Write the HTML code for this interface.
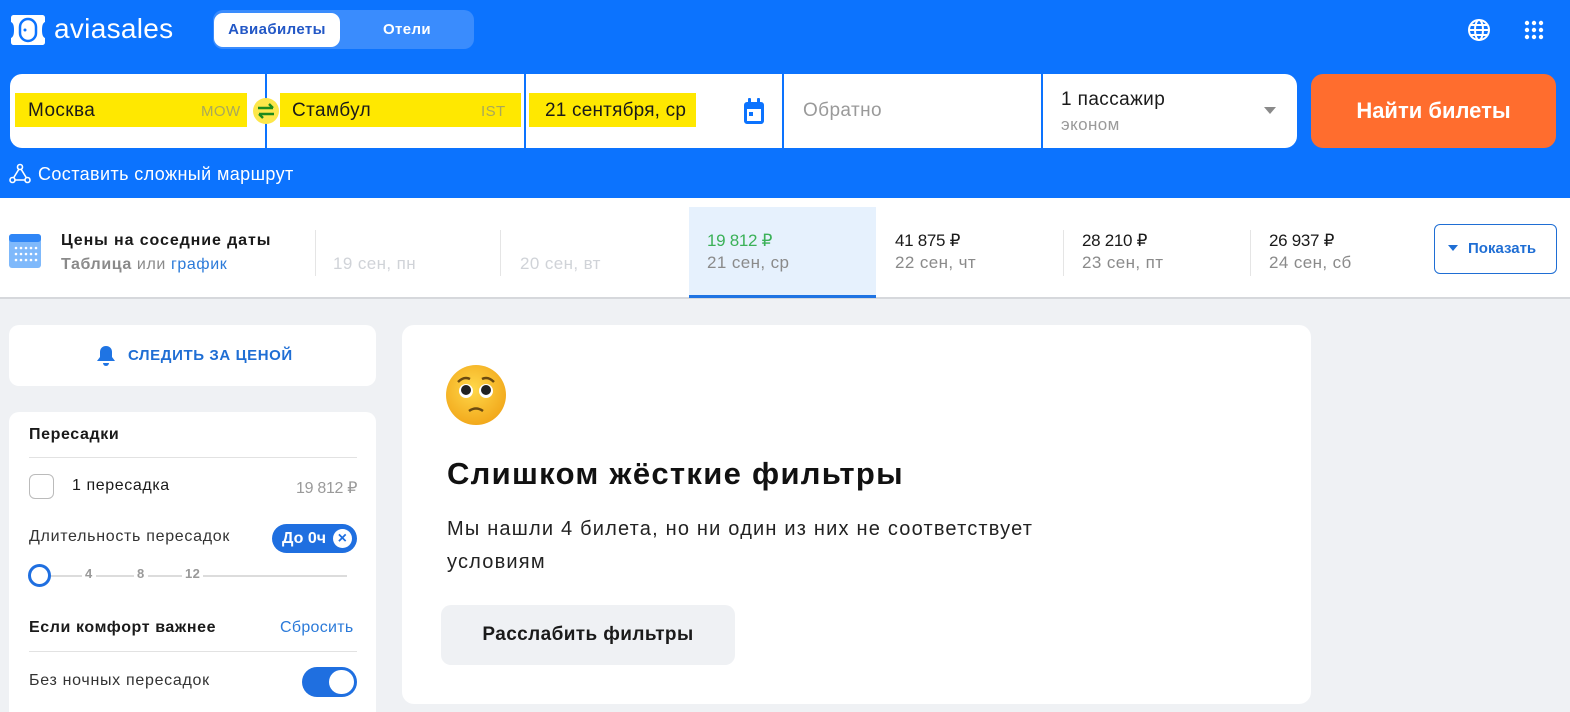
<!DOCTYPE html>
<html><head><meta charset="utf-8"><style>
*{box-sizing:border-box;margin:0;padding:0}
html,body{width:1570px;height:712px;overflow:hidden}
body{background:#eff1f4;font-family:"Liberation Sans","Noto Sans CJK SC",sans-serif;color:#1a1a1a;position:relative;letter-spacing:0.4px}
.abs{position:absolute}
.hdr{left:0;top:0;width:1570px;height:198px;background:#0c73fe}
.fld{top:74px;height:74px;background:#fff}
.yl{background:#ffe800;height:34px;top:93px}
.t18{font-size:19px}
</style></head><body>
<div class="abs hdr"></div>
<svg class="abs" style="left:10px;top:13px" width="36" height="34" viewBox="0 0 36 34"><path d="M4 2h28c2 0 3 1 3 3v4c-2 1-3 3-3 8s1 7 3 8v4c0 2-1 3-3 3H4c-2 0-3-1-3-3v-4c2-1 3-3 3-8S3 10 1 9V5c0-2 1-3 3-3z" fill="#fff"/><rect x="10" y="6" width="16" height="22" rx="8" fill="none" stroke="#0c73fe" stroke-width="2.5"/><circle cx="15" cy="17" r="1.5" fill="#0c73fe"/></svg>
<div class="abs" style="left:54px;top:13px;color:#fff;font-size:28px;letter-spacing:0.3px">aviasales</div>
<div class="abs" style="left:213px;top:10px;width:261px;height:39px;background:#3a8cfd;border-radius:10px"></div>
<div class="abs" style="left:214px;top:13px;width:126px;height:34px;background:#fff;border-radius:9px;color:#2257c6;font-weight:bold;font-size:15px;text-align:center;line-height:34px">Авиабилеты</div>
<div class="abs" style="left:340px;top:13px;width:134px;height:34px;color:#fff;font-weight:bold;font-size:15px;text-align:center;line-height:34px">Отели</div>
<svg class="abs" style="left:1467px;top:18px" width="24" height="24" viewBox="0 0 24 24" fill="none" stroke="#fff" stroke-width="2"><circle cx="12" cy="12" r="10"/><ellipse cx="12" cy="12" rx="4" ry="10"/><path d="M2 12h20M4 7h16M4 17h16"/></svg>
<svg class="abs" style="left:1524px;top:20px" width="20" height="20" fill="#fff"><circle cx="3" cy="3" r="2.2"/><circle cx="10" cy="3" r="2.2"/><circle cx="17" cy="3" r="2.2"/><circle cx="3" cy="10" r="2.2"/><circle cx="10" cy="10" r="2.2"/><circle cx="17" cy="10" r="2.2"/><circle cx="3" cy="17" r="2.2"/><circle cx="10" cy="17" r="2.2"/><circle cx="17" cy="17" r="2.2"/></svg>
<div class="abs fld" style="left:10px;width:255px;border-radius:12px 0 0 12px"></div>
<div class="abs fld" style="left:267px;width:257px"></div>
<div class="abs fld" style="left:526px;width:256px"></div>
<div class="abs fld" style="left:784px;width:257px"></div>
<div class="abs fld" style="left:1043px;width:254px;border-radius:0 12px 12px 0"></div>
<div class="abs yl" style="left:15px;width:232px"></div>
<div class="abs yl" style="left:280px;width:241px"></div>
<div class="abs yl" style="left:529px;width:167px"></div>
<div class="abs t18" style="left:28px;top:100px">Москва</div>
<div class="abs" style="left:201px;top:103px;font-size:15px;color:#a9a85a">MOW</div>
<div class="abs" style="left:253px;top:98px;width:26px;height:26px;border-radius:13px;background:#fde74a"></div>
<svg class="abs" style="left:257px;top:102px" width="18" height="18" fill="none" stroke="#1d8a1d" stroke-width="2.4"><path d="M1 6h15M12 2l4 4M17 12H2M6 16l-4-4"/></svg>
<div class="abs t18" style="left:292px;top:100px">Стамбул</div>
<div class="abs" style="left:481px;top:103px;font-size:15px;color:#a9a85a">IST</div>
<div class="abs t18" style="left:545px;top:100px;letter-spacing:0.2px">21 сентября, ср</div>
<svg class="abs" style="left:742px;top:98px" width="24" height="28" viewBox="0 0 24 28"><rect x="2" y="4" width="20" height="22" rx="3" fill="#0c73fe"/><rect x="5" y="11" width="14" height="12" fill="#fff"/><rect x="6" y="0" width="3" height="7" rx="1" fill="#0c73fe"/><rect x="15" y="0" width="3" height="7" rx="1" fill="#0c73fe"/><rect x="7" y="14" width="4" height="4" fill="#0c73fe"/></svg>
<div class="abs t18" style="left:803px;top:100px;color:#9a9a9a">Обратно</div>
<div class="abs t18" style="left:1061px;top:89px">1 пассажир</div>
<div class="abs" style="left:1061px;top:115px;font-size:17px;color:#9a9a9a">эконом</div>
<div class="abs" style="left:1264px;top:107px;border:6px solid transparent;border-top:7px solid #8a8a8a"></div>
<div class="abs" style="left:1311px;top:74px;width:245px;height:74px;background:#ff6d2e;border-radius:12px;color:#fff;font-weight:bold;font-size:22px;text-align:center;line-height:74px;letter-spacing:0">Найти билеты</div>
<svg class="abs" style="left:9px;top:163px" width="22" height="22" fill="none" stroke="#fff" stroke-width="1.6"><circle cx="11" cy="4" r="2.5"/><circle cx="3.5" cy="17" r="2.5"/><circle cx="18.5" cy="17" r="2.5"/><path d="M10 6L4.5 15M12 6l5.5 9M6 17h10"/></svg>
<div class="abs" style="left:38px;top:164px;color:#fff;font-size:18px">Составить сложный маршрут</div>
<div class="abs" style="left:0;top:198px;width:1570px;height:101px;background:#fff;border-bottom:2px solid #d6d8dc"></div>
<svg class="abs" style="left:9px;top:234px" width="32" height="34"><rect width="32" height="34" rx="3" fill="#7fb9fb"/><rect width="32" height="8" rx="3" fill="#2f86f6"/><g fill="#fff"><circle cx="7" cy="14" r="1.3"/><circle cx="12" cy="14" r="1.3"/><circle cx="17" cy="14" r="1.3"/><circle cx="22" cy="14" r="1.3"/><circle cx="27" cy="14" r="1.3"/><circle cx="7" cy="20" r="1.3"/><circle cx="12" cy="20" r="1.3"/><circle cx="17" cy="20" r="1.3"/><circle cx="22" cy="20" r="1.3"/><circle cx="27" cy="20" r="1.3"/><circle cx="7" cy="26" r="1.3"/><circle cx="12" cy="26" r="1.3"/><circle cx="17" cy="26" r="1.3"/><circle cx="22" cy="26" r="1.3"/><circle cx="27" cy="26" r="1.3"/></g></svg>
<div class="abs" style="left:61px;top:232px;font-size:16px;font-weight:bold;letter-spacing:0.9px">Цены на соседние даты</div>
<div class="abs" style="left:61px;top:256px;font-size:16px;color:#8a8a8a;letter-spacing:0.6px"><b>Таблица</b> или <span style="color:#2b7ad9">график</span></div>
<div class="abs" style="left:315px;top:230px;width:1px;height:46px;background:#e5e5e5"></div>
<div class="abs" style="left:500px;top:230px;width:1px;height:46px;background:#e5e5e5"></div>
<div class="abs" style="left:1063px;top:230px;width:1px;height:46px;background:#e5e5e5"></div>
<div class="abs" style="left:1250px;top:230px;width:1px;height:46px;background:#e5e5e5"></div>
<div class="abs" style="left:333px;top:254px;font-size:17px;color:#d0d3d8">19 сен, пн</div>
<div class="abs" style="left:520px;top:254px;font-size:17px;color:#d0d3d8">20 сен, вт</div>
<div class="abs" style="left:689px;top:207px;width:187px;height:91px;background:#e6f1fd;border-bottom:3px solid #1f74e3"></div>
<div class="abs" style="left:707px;top:231px;font-size:17px;color:#3bb158;letter-spacing:-0.3px">19 812 ₽</div>
<div class="abs" style="left:707px;top:253px;font-size:17px;color:#8a8a8a">21 сен, ср</div>
<div class="abs" style="left:895px;top:231px;font-size:17px;letter-spacing:-0.3px">41 875 ₽</div>
<div class="abs" style="left:895px;top:253px;font-size:17px;color:#8a8a8a">22 сен, чт</div>
<div class="abs" style="left:1082px;top:231px;font-size:17px;letter-spacing:-0.3px">28 210 ₽</div>
<div class="abs" style="left:1082px;top:253px;font-size:17px;color:#8a8a8a">23 сен, пт</div>
<div class="abs" style="left:1269px;top:231px;font-size:17px;letter-spacing:-0.3px">26 937 ₽</div>
<div class="abs" style="left:1269px;top:253px;font-size:17px;color:#8a8a8a">24 сен, сб</div>
<div class="abs" style="left:1434px;top:224px;width:123px;height:50px;border:1px solid #1f6ed4;border-radius:6px;color:#1f6ed4;font-size:15px;font-weight:bold;line-height:48px;padding-left:33px;letter-spacing:0">Показать</div>
<div class="abs" style="left:1448px;top:245px;border:5px solid transparent;border-top:6px solid #1f6ed4"></div>
<div class="abs" style="left:9px;top:325px;width:367px;height:61px;background:#fff;border-radius:10px"></div>
<svg class="abs" style="left:96px;top:345px" width="20" height="22" viewBox="0 0 20 22" fill="#1f74e3"><path d="M10 1c-4 0-6 3-6 6v5l-3 4h18l-3-4V7c0-3-2-6-6-6z"/><path d="M7 18h6a3 3 0 0 1-6 0z"/></svg>
<div class="abs" style="left:128px;top:347px;font-size:15px;font-weight:bold;color:#1f6ed4;letter-spacing:0.6px">СЛЕДИТЬ ЗА ЦЕНОЙ</div>
<div class="abs" style="left:9px;top:412px;width:367px;height:310px;background:#fff;border-radius:10px"></div>
<div class="abs" style="left:29px;top:426px;font-size:16px;font-weight:bold;letter-spacing:0.6px">Пересадки</div>
<div class="abs" style="left:29px;top:457px;width:328px;height:1px;background:#e2e2e2"></div>
<div class="abs" style="left:29px;top:474px;width:25px;height:25px;border:1px solid #bbb;border-radius:6px"></div>
<div class="abs" style="left:72px;top:477px;font-size:16px;letter-spacing:0.6px">1 пересадка</div>
<div class="abs" style="left:296px;top:478px;font-size:16px;color:#9a9a9a;letter-spacing:-0.3px">19 812 ₽</div>
<div class="abs" style="left:29px;top:528px;font-size:16px;color:#333;letter-spacing:0.7px">Длительность пересадок</div>
<div class="abs" style="left:272px;top:524px;width:85px;height:29px;background:#1f6fe0;border-radius:15px;color:#fff;font-weight:bold;font-size:16px;line-height:29px;padding-left:10px;letter-spacing:0">До 0ч</div>
<div class="abs" style="left:333px;top:529px;width:19px;height:19px;border-radius:10px;background:#fff;color:#1f6fe0;font-size:16px;text-align:center;line-height:19px;font-weight:bold">×</div>
<div class="abs" style="left:40px;top:575px;width:307px;height:2px;background:#dcdcdc"></div>
<div class="abs" style="left:82px;top:566px;background:#fff;padding:0 3px;font-size:13px;color:#999;font-weight:bold">4</div>
<div class="abs" style="left:134px;top:566px;background:#fff;padding:0 3px;font-size:13px;color:#999;font-weight:bold">8</div>
<div class="abs" style="left:182px;top:566px;background:#fff;padding:0 3px;font-size:13px;color:#999;font-weight:bold">12</div>
<div class="abs" style="left:28px;top:564px;width:23px;height:23px;border:3px solid #1f6fe0;border-radius:12px;background:#fff"></div>
<div class="abs" style="left:29px;top:619px;font-size:16px;font-weight:bold;letter-spacing:0.6px">Если комфорт важнее</div>
<div class="abs" style="left:280px;top:619px;font-size:16px;color:#2b7ad9;letter-spacing:0.3px">Сбросить</div>
<div class="abs" style="left:29px;top:651px;width:328px;height:1px;background:#e2e2e2"></div>
<div class="abs" style="left:29px;top:672px;font-size:16px;color:#333;letter-spacing:0.7px">Без ночных пересадок</div>
<div class="abs" style="left:302px;top:667px;width:55px;height:30px;border-radius:15px;background:#1f6fe0"></div>
<div class="abs" style="left:329px;top:670px;width:25px;height:24px;border-radius:12px;background:#fff"></div>
<div class="abs" style="left:402px;top:325px;width:909px;height:379px;background:#fff;border-radius:12px"></div>
<svg class="abs" style="left:445px;top:364px" width="62" height="62" viewBox="0 0 62 62"><defs><radialGradient id="g" cx="0.45" cy="0.4" r="0.6"><stop offset="0" stop-color="#ffd84a"/><stop offset="1" stop-color="#f2a91c"/></radialGradient></defs><circle cx="31" cy="31" r="30" fill="url(#g)"/><path d="M13 18q6-6 12-3M49 18q-6-6-12-3" stroke="#6b4a10" stroke-width="2.5" fill="none"/><circle cx="21" cy="27" r="7" fill="#fff"/><circle cx="41" cy="27" r="7" fill="#fff"/><circle cx="21" cy="26" r="5" fill="#222"/><circle cx="41" cy="26" r="5" fill="#222"/><path d="M24 47q7-5 14 0" stroke="#6b4a10" stroke-width="2.5" fill="none"/></svg>
<div class="abs" style="left:447px;top:456px;font-size:31px;font-weight:bold;color:#111;letter-spacing:1.3px">Слишком жёсткие фильтры</div>
<div class="abs" style="left:447px;top:513px;font-size:20px;line-height:33px;color:#222;width:610px;letter-spacing:1.2px">Мы нашли 4 билета, но ни один из них не соответствует условиям</div>
<div class="abs" style="left:441px;top:605px;width:294px;height:60px;background:#eff1f4;border-radius:10px;font-size:19px;font-weight:bold;text-align:center;line-height:60px;letter-spacing:0.4px">Расслабить фильтры</div>
</body></html>
